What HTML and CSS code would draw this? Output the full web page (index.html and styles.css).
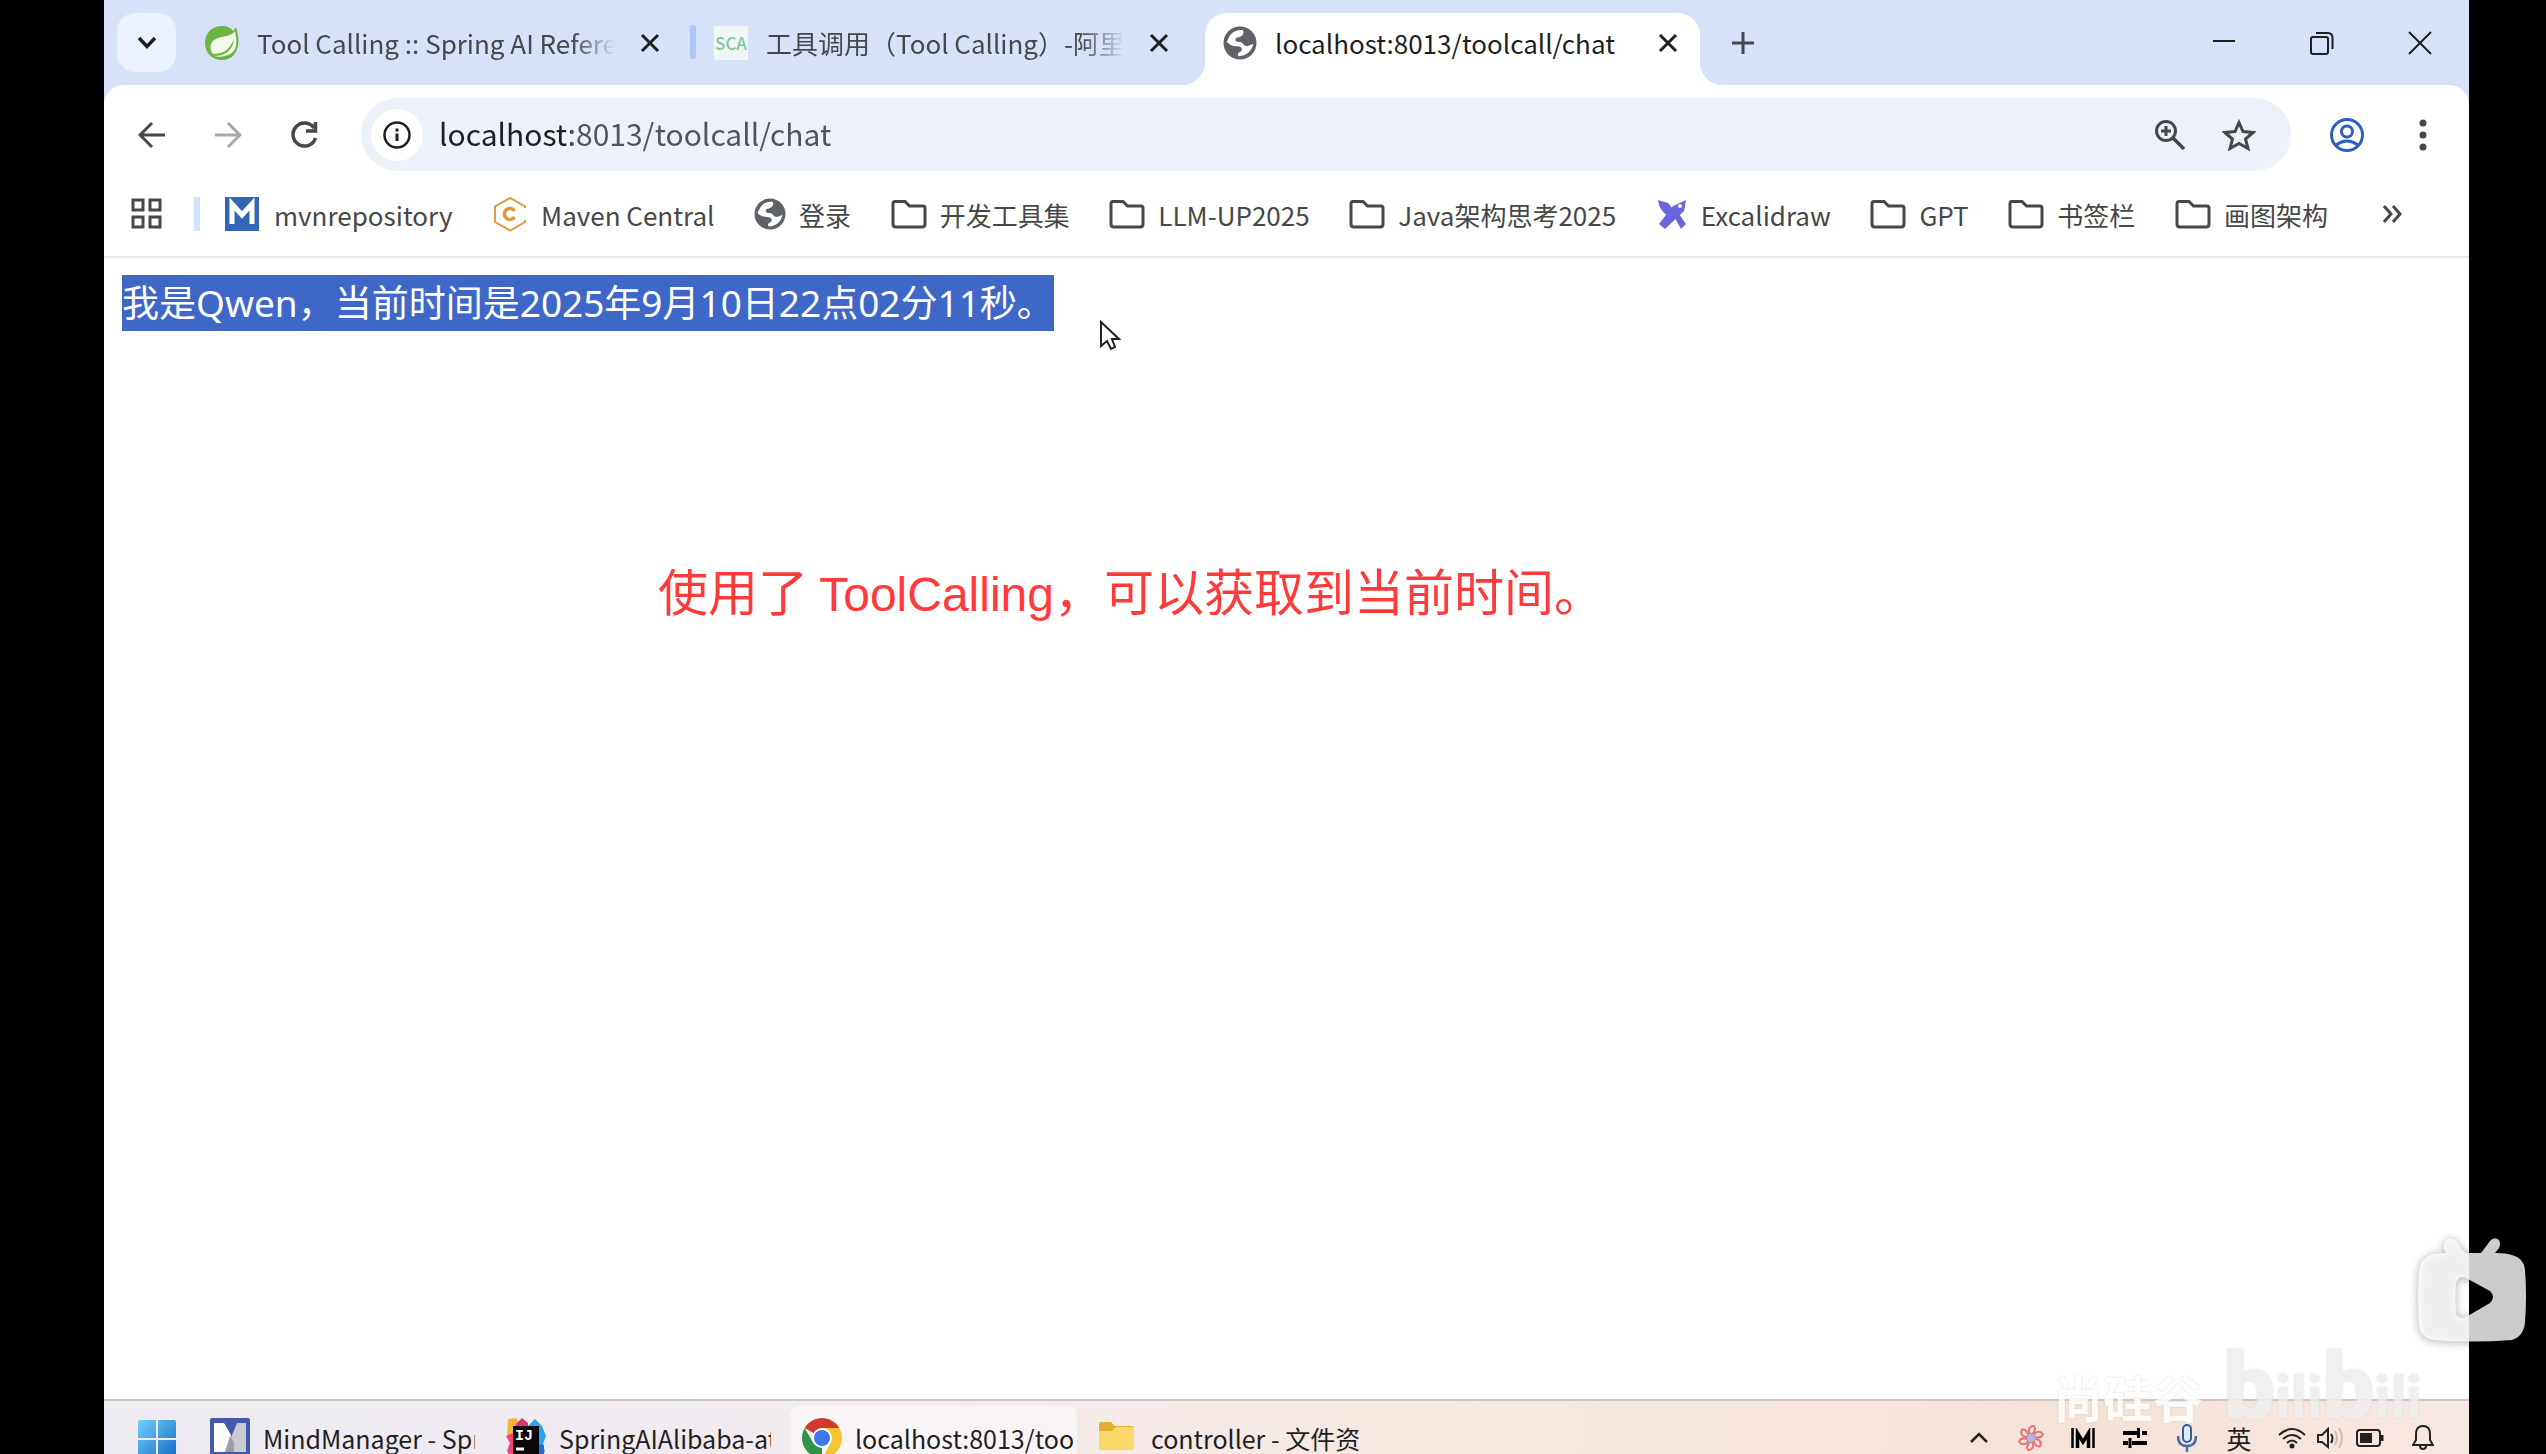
FILE: index.html
```html
<!DOCTYPE html>
<html lang="zh-CN">

<head>
    <meta charset="UTF-8">
    <meta name="viewport" content="width=device-width, initial-scale=1.0">
    <title>localhost:8013/toolcall/chat</title>
    <link rel="stylesheet" href="styles.css">
</head>

<body>
    <!-- shared icons -->
    <svg class="sprite" aria-hidden="true">
        <symbol id="folder" viewBox="0 0 36 36">
            <path d="M4 5.500h10l4.500 4.500H32q2 0 2 2v16q0 3-3 3H5q-3 0-3-3V8q0-2.500 2-2.500z" fill="none" stroke="#474747" stroke-width="3"></path>
        </symbol>
        <symbol id="globe" viewBox="0 0 32 32">
            <circle cx="16" cy="16" r="15.500" fill="#5f6368"></circle>
            <path d="M5 12 C7 7 12 3 19 4 C20 8 18 10 13 11 C10 13 12 15 16 15 C20 16 19 19 23 19 C26 18 27 17 28.500 17 C27 24 22 28 15 28.500 C13 27 14 25 17 24 C19 21 17 19 13 19 C8 19 6 17 3.500 15z" fill="#fff"></path>
        </symbol>
        <symbol id="close" viewBox="0 0 20 20">
            <path d="M2 2L18 18M18 2L2 18" fill="none" stroke="currentColor" stroke-width="3"></path>
        </symbol>
    </svg>

    <div class="window">
        <header class="tab-strip">
            <button class="tab-search" aria-label="Search tabs">
                <svg width="20" height="14" viewBox="0 0 20 14"><path d="M2 2L10 10.500L18 2" fill="none" stroke="#1f1f1f" stroke-width="3.500"></path></svg>
            </button>
            <div class="tab">
                <svg class="favicon" viewBox="0 0 34 34">
                    <path d="M31 1C33 8 34 14 33 20C31 29 25 34 17 34C7 34 0 27 0 17C0 7 7 0 17 0C22 0 26 2 28 5Q30 3 31 1z" fill="#6db33f"></path>
                    <path d="M30 5C25 12 17 9 9 14C4 18 5 25 8 28C17 28 24 25 29 13C28 24 20 30 9 30C17 32 29 30 31 20Q32 13 30 5z" fill="#f3fae9"></path>
                </svg>
                <span class="tab-title">Tool Calling :: Spring AI Reference</span>
                <button class="tab-close" aria-label="Close tab"><svg><use href="#close"></use></svg></button>
            </div>
            <div class="tab">
                <span class="favicon sca">SCA</span>
                <span class="tab-title">工具调用（Tool Calling）-阿里云</span>
                <button class="tab-close" aria-label="Close tab"><svg><use href="#close"></use></svg></button>
            </div>
            <div class="tab tab-active">
                <svg class="favicon"><use href="#globe"></use></svg>
                <span class="tab-title">localhost:8013/toolcall/chat</span>
                <button class="tab-close" aria-label="Close tab"><svg><use href="#close"></use></svg></button>
            </div>
            <button class="new-tab" aria-label="New tab">
                <svg width="22" height="22" viewBox="0 0 22 22"><path d="M11 0V22M0 11H22" stroke="#474747" stroke-width="3"></path></svg>
            </button>
            <div class="window-controls">
                <button aria-label="Minimize"><svg width="24" height="24" viewBox="0 0 24 24"><path d="M1 10H23" stroke="#1f1f1f" stroke-width="2"></path></svg></button>
                <button aria-label="Restore"><svg width="24" height="24" viewBox="0 0 24 24"><g fill="none" stroke="#1f1f1f" stroke-width="2"><rect x="1" y="6" width="17" height="17" rx="2"></rect><path d="M6 2H18Q22.500 2 22.500 7V18"></path></g></svg></button>
                <button aria-label="Close"><svg width="24" height="24" viewBox="0 0 24 24"><path d="M1 1L23 23M23 1L1 23" stroke="#1f1f1f" stroke-width="2"></path></svg></button>
            </div>
        </header>

        <div class="chrome">
            <nav class="toolbar">
                <button class="tool" aria-label="Back"><svg width="28" height="28" viewBox="0 0 28 28"><path d="M27 14H3M14 2L2 14L14 26" fill="none" stroke="#474747" stroke-width="3"></path></svg></button>
                <button class="tool" aria-label="Forward"><svg width="28" height="28" viewBox="0 0 28 28"><path d="M1 14H25M14 2L26 14L14 26" fill="none" stroke="#a9a9a9" stroke-width="3"></path></svg></button>
                <button class="tool" aria-label="Reload"><svg width="28" height="28" viewBox="0 0 28 28"><path d="M24 7A11.500 11.500 0 1 0 25.500 17M25.500 1V10H16" fill="none" stroke="#474747" stroke-width="3.500"></path></svg></button>
                <div class="address">
                    <button class="site-info" aria-label="Site information">
                        <svg width="28" height="28" viewBox="0 0 28 28"><circle cx="14" cy="14" r="12.500" fill="none" stroke="#1f1f1f" stroke-width="2.500"></circle><path d="M14 12.500V20M14 7.500V10.500" stroke="#1f1f1f" stroke-width="3"></path></svg>
                    </button>
                    <input type="text" aria-label="Address" value="localhost:8013/toolcall/chat">
                    <button class="tool" aria-label="Zoom"><svg width="30" height="30" viewBox="0 0 30 30"><g fill="none" stroke="#474747"><circle cx="11" cy="11" r="9.500" stroke-width="3"></circle><path d="M18 18L29 29" stroke-width="3.500"></path><path d="M11 6V16M6 11H16" stroke-width="3"></path></g></svg></button>
                    <button class="tool" aria-label="Bookmark this tab"><svg width="34" height="32" viewBox="0 0 34 32"><path d="M17 3.500L21 12.500L31 13.500L23.500 20L26 29.500L17 24.500L8 29.500L10.500 20L3 13.500L13 12.500z" fill="none" stroke="#474747" stroke-width="3"></path></svg></button>
                </div>
                <button class="tool profile" aria-label="Profile"><svg width="36" height="36" viewBox="0 0 36 36"><g fill="none" stroke="#2b5fc0" stroke-width="3"><circle cx="18" cy="18" r="15.500"></circle><circle cx="18" cy="14.500" r="5.500"></circle><path d="M7 28Q18 20 29 28"></path></g></svg></button>
                <button class="tool" aria-label="Menu"><svg width="8" height="32" viewBox="0 0 8 32"><g fill="#474747"><circle cx="4" cy="4" r="3.500"></circle><circle cx="4" cy="16" r="3.500"></circle><circle cx="4" cy="28" r="3.500"></circle></g></svg></button>
            </nav>

            <nav class="bookmarks">
                <button class="apps" aria-label="Apps"><svg width="32" height="32" viewBox="0 0 32 32"><g fill="none" stroke="#474747" stroke-width="3"><rect x="2" y="2" width="10" height="10"></rect><rect x="19" y="2" width="10" height="10"></rect><rect x="2" y="19" width="10" height="10"></rect><rect x="19" y="19" width="10" height="10"></rect></g></svg></button>
                <ul>
                    <li><a href="#"><svg viewBox="0 0 36 36"><rect x="0" y="1" width="34" height="34" fill="#3366b5"></rect><path d="M7 28V8L17 19L27 8V28" fill="none" stroke="#fff" stroke-width="5"></path></svg>mvnrepository</a></li>
                    <li><a href="#"><svg viewBox="0 0 36 36"><g fill="none" stroke="#dd9a3f"><path d="M33 12V10.500L18 2L3 10.500V26L18 34.500L33 26V24" stroke-width="2"></path><path d="M22.500 15A5.500 5.500 0 1 0 22.500 21" stroke-width="3.500"></path></g></svg>Maven Central</a></li>
                    <li><a href="#"><svg class="globe"><use href="#globe"></use></svg>登录</a></li>
                    <li><a href="#"><svg><use href="#folder"></use></svg>开发工具集</a></li>
                    <li><a href="#"><svg><use href="#folder"></use></svg>LLM-UP2025</a></li>
                    <li><a href="#"><svg><use href="#folder"></use></svg>Java架构思考2025</a></li>
                    <li><a href="#"><svg class="globe" viewBox="0 0 32 32"><g fill="#6965db"><path d="M2 2L12 5L17 11L12 18Q3 12 2 2z"></path><path d="M30 2L28 13L9 31L3 26L17 8z"></path><path d="M19 20L23 16L30 26L25 31z"></path></g><circle cx="24" cy="8" r="2" fill="#fff"></circle></svg>Excalidraw</a></li>
                    <li><a href="#"><svg><use href="#folder"></use></svg>GPT</a></li>
                    <li><a href="#"><svg><use href="#folder"></use></svg>书签栏</a></li>
                    <li><a href="#"><svg><use href="#folder"></use></svg>画图架构</a></li>
                </ul>
                <button class="more" aria-label="More bookmarks"><svg width="20" height="18" viewBox="0 0 20 18"><path d="M2 1L9 9L2 17M11 1L18 9L11 17" fill="none" stroke="#474747" stroke-width="3"></path></svg></button>
            </nav>
        </div>

        <main class="page">
            <p class="answer"><mark>我是Qwen，当前时间是2025年9月10日22点02分11秒。</mark></p>
            <p class="note">使用了 <span>ToolCalling</span>，可以获取到当前时间。</p>
        </main>

        <footer class="taskbar">
            <button class="start" aria-label="Start">
                <svg width="38" height="38" viewBox="0 0 38 38">
                    <defs><linearGradient id="win" x1="0" y1="0" x2="1" y2="1"><stop offset="0" stop-color="#6fd0fa"></stop><stop offset="1" stop-color="#1769c4"></stop></linearGradient></defs>
                    <path d="M2 0H18V18H0V2Q0 0 2 0zM20 0H36Q38 0 38 2V18H20zM0 20H18V38H0zM20 20H38V38H20z" fill="url(#win)"></path>
                </svg>
            </button>
            <button class="task">
                <svg viewBox="0 0 40 40"><rect width="40" height="40" rx="2" fill="#4459a8"></rect><path d="M4 5H14L21 17V34H4z" fill="#fff"></path><path d="M36 5H27L15 34H36z" fill="#c9cbd2"></path><path d="M20 18L15 34H24V24z" fill="#999da8"></path></svg>
                <span>MindManager - Spring</span>
            </button>
            <button class="task">
                <svg viewBox="0 0 40 40">
                    <path d="M2 1L10 0L16 8L8 25L1 20z" fill="#f9b233"></path>
                    <path d="M10 6L16 0L22 5V14H8z" fill="#d9376e"></path>
                    <path d="M0 18L9 14V40H5L1 33L4 25z" fill="#f0437a"></path>
                    <path d="M22 8L29 1L36 8L40 18L37 26L39 34L30 40L24 30z" fill="#27a5ee"></path>
                    <path d="M31 26L38 27V36L30 40z" fill="#2868dd"></path>
                    <rect x="7" y="8" width="26" height="28" fill="#0b0609"></rect>
                    <text x="9" y="22" class="ij">IJ</text><path d="M10 31H18" stroke="#fff" stroke-width="3"></path>
                </svg>
                <span>SpringAIAlibaba-atguigu</span>
            </button>
            <button class="task task-active">
                <svg viewBox="0 0 40 40">
                    <path d="M20 20L2.700 10A20 20 0 0 1 37.300 10z" fill="#d0392e"></path>
                    <path d="M20 10H37.300A20 20 0 0 1 20 40L28.700 25z" fill="#f7c433"></path>
                    <path d="M2.700 10L11.300 25L20 30L20 40A20 20 0 0 1 2.700 10z" fill="#31934a"></path>
                    <circle cx="20" cy="20" r="10" fill="#fff"></circle><circle cx="20" cy="20" r="8" fill="#3b78e7"></circle>
                </svg>
                <span>localhost:8013/too</span>
            </button>
            <button class="task">
                <svg viewBox="0 0 40 40"><path d="M1 6Q1 4 3 4H13L17 8H34Q36 8 36 10V18H1z" fill="#e5ad35"></path><path d="M1 13H14L18 9H36V30Q36 32 34 32H3Q1 32 1 30z" fill="#f9d768"></path></svg>
                <span>controller - 文件资</span>
            </button>

            <div class="tray">
                <button aria-label="Hidden icons"><svg width="18" height="12" viewBox="0 0 18 12"><path d="M1 10L9 2L17 10" fill="none" stroke="#222" stroke-width="2.500"></path></svg></button>
                <button aria-label="Assistant"><svg width="26" height="26" viewBox="0 0 26 26"><g fill="none" stroke="#e3747d" stroke-width="2"><path id="petal" d="M13 10C9 6 11 1 16 1C18 4 17 7 13 10"></path><use href="#petal" transform="rotate(60 13 13)"></use><use href="#petal" transform="rotate(120 13 13)"></use><use href="#petal" transform="rotate(180 13 13)"></use><use href="#petal" transform="rotate(240 13 13)"></use><use href="#petal" transform="rotate(300 13 13)"></use></g><circle cx="13" cy="13" r="4" fill="#a9b9e6"></circle></svg></button>
                <button aria-label="Monitor"><svg width="24" height="20" viewBox="0 0 24 20"><path d="M1.500 0V20M22.500 0V20" stroke="#000" stroke-width="2.500"></path><path d="M6.500 20V5L12 14L17.500 5V20" fill="none" stroke="#000" stroke-width="3.500"></path></svg></button>
                <button aria-label="Mixer"><svg width="24" height="20" viewBox="0 0 24 20"><path d="M0 5H16M19 5H24M0 15H5M9 15H24" stroke="#000" stroke-width="4"></path><path d="M15.500 0V10M7 10V20" stroke="#000" stroke-width="3"></path></svg></button>
                <button aria-label="Microphone"><svg width="20" height="28" viewBox="0 0 20 28"><rect x="6" y="1" width="8" height="17" rx="4" fill="#dcecff" stroke="#365a9e" stroke-width="2"></rect><path d="M1 12Q1 22 10 22Q19 22 19 12M10 22V28" fill="none" stroke="#4568ac" stroke-width="2.500"></path></svg></button>
                <button class="ime">英</button>
                <button class="status" aria-label="Network, volume and battery">
                    <svg width="28" height="22" viewBox="0 0 28 22"><g fill="none" stroke="#222" stroke-width="2"><path d="M1 8Q14 -4 27 8M5 12Q14 4 23 12M9 16Q14 11 19 16"></path></g><circle cx="14" cy="19" r="2.500" fill="#222"></circle></svg>
                    <svg width="28" height="22" viewBox="0 0 28 22"><g fill="none" stroke="#222" stroke-width="2"><path d="M1 8H5L11 2V20L5 15H1z"></path><path d="M14 7Q17 11 14 16"></path><path d="M18 4Q22 11 18 18M22 1Q28 11 22 21" stroke="#cbbdb4"></path></g></svg>
                    <svg width="28" height="22" viewBox="0 0 28 22"><rect x="1" y="3" width="23" height="16" rx="3" fill="none" stroke="#222" stroke-width="2"></rect><rect x="4" y="6" width="12" height="10" fill="#222"></rect><path d="M26 8V14" stroke="#222" stroke-width="3"></path></svg>
                </button>
                <button aria-label="Notifications"><svg width="22" height="26" viewBox="0 0 22 26"><path d="M1 20L4 15V9Q4 1 11 1Q18 1 18 9V15L21 20zM8 21Q8 24 11 24Q14 24 14 21" fill="none" stroke="#222" stroke-width="2"></path></svg></button>
            </div>
        </footer>
    </div>

    <svg class="cursor" width="21" height="31" viewBox="0 0 21 31"><path d="M1 2V26L7 21L11 29L15 27L12 19H19z" fill="#fff" stroke="#222" stroke-width="2"></path></svg>

    <div class="watermark">
        <span class="author">尚硅谷</span>
        <span class="brand"><b>b</b>ili<b>b</b>ili</span>
    </div>

    <button class="player" aria-label="Play">
        <svg width="110" height="104" viewBox="0 0 110 104">
            <path fill-rule="evenodd" d="M29 15L27 11Q26 5 29 2Q35 -2 39 3L48 15H64L73 3Q77 -2 82 2Q84 6 82 10L78 15Q90 15 95 17Q107 20 108 32Q110 59 108 84Q107 98 95 102Q55 105 16 102Q3 99 2 87Q0 59 2 32Q4 19 16 16Q22 15 29 15zM39 45Q38 59 39 75Q41 82 49 79L73 65Q79 59 73 53L49 40Q41 37 39 45z" fill="#fff" fill-opacity="0.8"></path>
        </svg>
    </button>
</body>

</html>
```
FILE: styles.css
```css
* {
    box-sizing: border-box;
    font-family: "Noto Sans CJK SC", "Noto Sans", sans-serif;
}

html,
body {
    height: 100vh;
    margin: 0;
    overflow: hidden;
    background: #000;
}

body {
    position: relative;
    padding: 0 77px 0 104px;
}

button {
    display: flex;
    align-items: center;
    justify-content: center;
    flex: none;
    padding: 0;
    border: 0;
    background: none;
    color: #1f1f1f;
    cursor: pointer;
}

.sprite {
    position: absolute;
    width: 0;
    height: 0;
}

.window {
    display: flex;
    flex-direction: column;
    height: 100%;
    background: #fff;
}

/* tabs */

.tab-strip {
    display: flex;
    height: 85px;
    padding: 13px 0 0 13px;
    background: #d7e2fa;
}

.tab-search {
    width: 59px;
    height: 59px;
    margin-right: 11px;
    border-radius: 18px;
    background: #ebf2fd;
}

.tab {
    position: relative;
    display: flex;
    align-items: center;
    flex: 0 1 495px;
    min-width: 0;
    margin-right: 14px;
    padding: 0 15px 12px 18px;
    color: #474747;
}

.tab:not(.tab-active)::after {
    content: "";
    position: absolute;
    top: 12px;
    right: -14px;
    width: 6px;
    height: 34px;
    border-radius: 3px;
    background: #abc6f7;
}

.tab:nth-of-type(2)::after {
    display: none;
}

.tab-active {
    margin-right: 0;
    border-radius: 22px 22px 0 0;
    background: #fff;
    color: #1f1f1f;
}

.tab-active::before,
.tab-active::after {
    content: "";
    position: absolute;
    bottom: 0;
    width: 24px;
    height: 24px;
}

.tab-active::before {
    left: -24px;
    background: radial-gradient(circle at 0 0, transparent 24px, #fff 25px);
}

.tab-active::after {
    right: -24px;
    background: radial-gradient(circle at 100% 0, transparent 24px, #fff 25px);
}

.favicon {
    flex: none;
    width: 34px;
    height: 34px;
    margin-right: 18px;
}

.sca {
    background: #f2f5f5;
    color: #7cc79a;
    font-size: 17px;
    font-weight: 500;
    line-height: 34px;
    text-align: center;
}

.tab-title {
    flex: 1;
    overflow: hidden;
    font-size: 26px;
    line-height: 36px;
    white-space: nowrap;
    mask-image: linear-gradient(90deg, #000 86%, transparent 98%);
}

.tab-active .tab-title {
    mask-image: none;
}

.tab-close {
    width: 34px;
    height: 34px;
    margin-left: 10px;
}

.tab-close svg {
    width: 20px;
    height: 20px;
}

.new-tab {
    width: 60px;
    height: 60px;
    margin-left: 13px;
}

.window-controls {
    display: flex;
    margin-left: auto;
}

.window-controls button {
    width: 98px;
    height: 60px;
}

/* toolbar */

.chrome {
    border-bottom: 2px solid #e6e6e6;
    background: linear-gradient(#d7e2fa 20px, #fff 20px);
}

.toolbar {
    display: flex;
    align-items: center;
    padding: 13px 20px 13px 22px;
    border-radius: 20px 20px 0 0;
    background: #fff;
}

.tool {
    width: 52px;
    height: 52px;
}

.toolbar > .tool + .tool {
    margin-left: 24px;
}

.address {
    display: flex;
    align-items: center;
    flex: 1;
    height: 73px;
    margin-left: 31px;
    padding: 0 26px 0 10px;
    border-radius: 37px;
    background: #ecf1fa;
}

.site-info {
    width: 52px;
    height: 52px;
    border-radius: 50%;
    background: #fff;
}

.address input {
    flex: 1;
    min-width: 0;
    height: 52px;
    margin-left: 16px;
    padding: 0 0 4px;
    border: 0;
    outline: 0;
    background: linear-gradient(90deg, #1f1f1f 132px, #50545a 132px);
    -webkit-background-clip: text;
    background-clip: text;
    color: transparent;
    font-size: 30px;
}

.address .tool + .tool {
    margin-left: 17px;
}

.toolbar > .profile {
    margin-left: 30px;
}

/* bookmarks */

.bookmarks {
    display: flex;
    align-items: center;
    padding: 0 67px 12px 27px;
    background: #fff;
}

.bookmarks ul {
    display: flex;
    justify-content: space-between;
    flex: 1;
    margin: 0 54px 0 31px;
    padding: 0 0 0 31px;
    list-style: none;
    background: linear-gradient(#d3e3fd, #d3e3fd) left center / 6px 34px no-repeat;
}

.bookmarks a {
    display: flex;
    align-items: center;
    height: 60px;
    color: #474747;
    font-size: 26px;
    white-space: nowrap;
    text-decoration: none;
}

.bookmarks a svg {
    width: 36px;
    height: 36px;
    margin-right: 13px;
}

.bookmarks a .globe {
    width: 32px;
    height: 32px;
}

/* page */

.page {
    flex: 1;
    padding: 17px 18px;
}

.answer {
    margin: 0;
    font-size: 37px;
    line-height: 56px;
}

.answer mark {
    display: inline-block;
    background: #3e67c8;
    color: #fff;
    font-family: "Noto Sans", "Noto Sans CJK SC", sans-serif;
    vertical-align: top;
}

.note {
    margin: 221px 0 0 536px;
    color: #fe3b3a;
    font-size: 50px;
    line-height: 74px;
}

.note span {
    font-family: "Liberation Sans", sans-serif;
    font-size: 48px;
    line-height: 1;
}

.cursor {
    position: absolute;
    top: 320px;
    left: 1100px;
}

/* taskbar */

.taskbar {
    display: flex;
    align-items: flex-start;
    height: 55px;
    padding: 5px 20px 0 34px;
    overflow: hidden;
    border-top: 2px solid #cbc8ca;
    background: linear-gradient(90deg, #eeebf3, #f1ebf1 25%, #f6e9e1 55%, #f4e2d6 85%, #f8e8e3);
}

.start {
    margin: 14px 23px 0 0;
}

.task {
    justify-content: flex-start;
    flex: 0 1 286px;
    min-width: 0;
    height: 64px;
    margin-right: 10px;
    padding: 0 10px 0 11px;
    border-radius: 8px;
    font-size: 25px;
}

.task svg {
    flex: none;
    width: 40px;
    height: 40px;
    margin-right: 13px;
}

.task span {
    overflow: hidden;
    white-space: nowrap;
}

.task-active {
    padding-right: 4px;
    background: #f9f5f6;
}

.ij {
    fill: #fff;
    font-family: "Liberation Mono", monospace;
    font-size: 15px;
    font-weight: 700;
}

.tray {
    display: flex;
    align-items: center;
    height: 64px;
    margin-left: auto;
}

.tray button {
    width: 52px;
}

.tray .ime {
    font-size: 25px;
}

.tray .status {
    gap: 11px;
    width: 132px;
}

/* overlays */

.watermark {
    position: absolute;
    right: 124px;
    bottom: 26px;
    display: flex;
    align-items: baseline;
    gap: 20px;
    color: #fff;
    opacity: 0.85;
    text-shadow: 0 0 2px #ccc;
}

.author {
    font-size: 50px;
    font-weight: 700;
    line-height: 60px;
}

.brand {
    color: #eee;
    font-family: Roboto, sans-serif;
    font-size: 60px;
    font-weight: 700;
    line-height: 60px;
}

.brand b {
    font-family: Roboto, sans-serif;
    font-size: 92px;
}

.player {
    position: absolute;
    right: 19px;
    bottom: 112px;
    filter: drop-shadow(0 1px 4px rgba(0, 0, 0, 0.4));
}
```
